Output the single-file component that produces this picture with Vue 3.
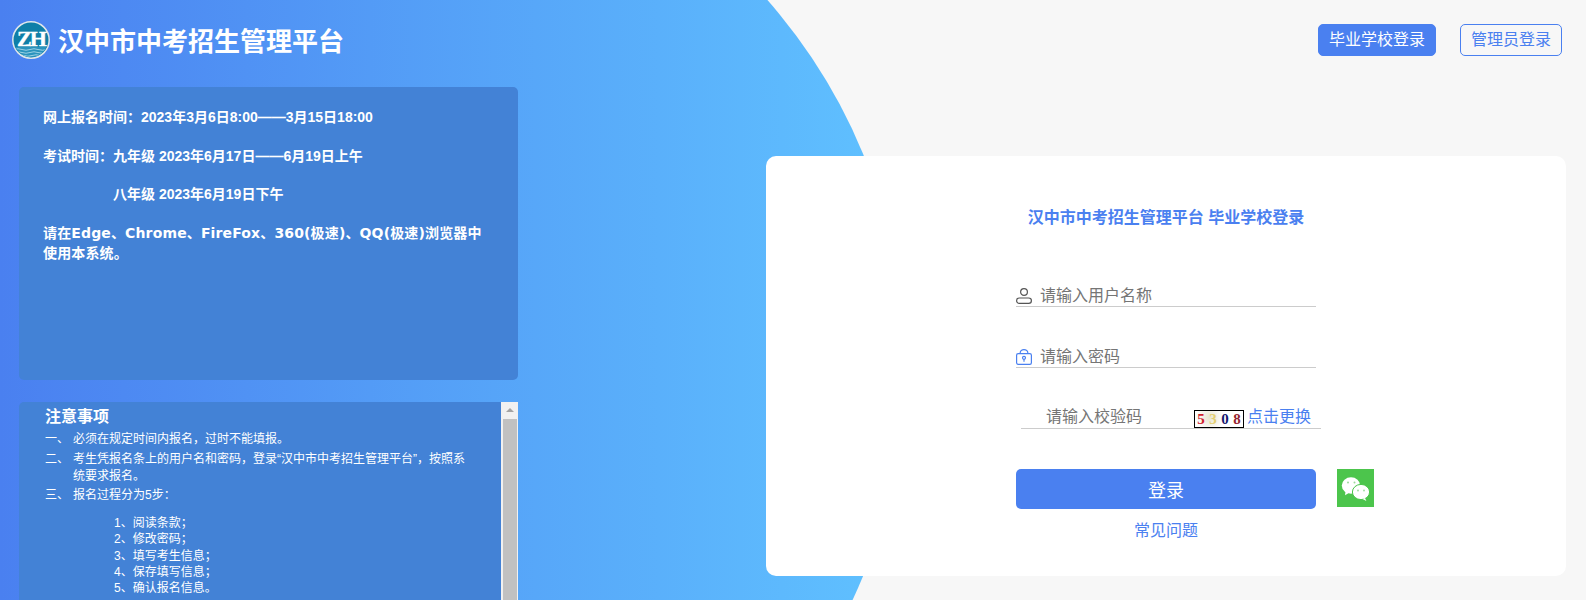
<template>
  <div class="page">
    <div class="hero"></div>

    <header class="top">
      <div class="brand">
        <svg class="logo" width="38" height="38" viewBox="0 0 38 38">
          <defs>
            <clipPath id="logoClip"><circle cx="19" cy="19" r="17" /></clipPath>
          </defs>
          <circle cx="19" cy="19" r="18.2" fill="#0f7fa8" stroke="#dfe6ea" stroke-width="1.5" />
          <g clip-path="url(#logoClip)">
            <rect x="0" y="26" width="38" height="12" fill="#2a93bd" />
            <path d="M2 28.5q4-1.5 8 0t8 0 8 0 10 0M2 31.5q4-1.5 8 0t8 0 8 0 10 0M4 34.5q4-1.5 8 0t8 0 8 0" fill="none" stroke="#a8d8e8" stroke-width="0.9" />
          </g>
          <text x="19" y="25" text-anchor="middle" class="logo-text">ZH</text>
        </svg>
        <h1>汉中市中考招生管理平台</h1>
      </div>
      <div class="tabs">
        <a class="tab active">毕业学校登录</a>
        <a class="tab">管理员登录</a>
      </div>
    </header>

    <main class="main">
      <aside class="side">
        <section class="panel info">
          <p>网上报名时间：2023年3月6日8:00——3月15日18:00</p>
          <p>考试时间：九年级 2023年6月17日——6月19日上午</p>
          <p class="indent">八年级 2023年6月19日下午</p>
          <p class="wide">请在Edge、Chrome、FireFox、360(极速)、QQ(极速)浏览器中使用本系统。</p>
        </section>

        <section class="panel notice">
          <div class="notice-body">
            <h3>注意事项</h3>
            <ol class="items">
              <li v-for="item in items" :key="item.no">
                <span class="no">{{ item.no }}、</span>
                <span>{{ item.text }}</span>
              </li>
            </ol>
            <div class="steps">
              <div v-for="step in steps" :key="step">{{ step }}</div>
            </div>
          </div>
          <div class="scrollbar">
            <span class="arrow"></span>
            <span class="thumb"></span>
          </div>
        </section>
      </aside>

      <section class="card">
        <h2>汉中市中考招生管理平台 毕业学校登录</h2>
        <form class="form" @submit.prevent>
          <label class="field">
            <svg width="16" height="16" viewBox="0 0 16 16" fill="none" stroke="#555" stroke-width="1.2">
              <circle cx="8" cy="4" r="3.4" />
              <rect x="0.6" y="10" width="14.8" height="5.4" rx="2.7" />
            </svg>
            <input type="text" placeholder="请输入用户名称" />
          </label>
          <label class="field">
            <svg width="16" height="16" viewBox="0 0 16 16" fill="none" stroke="#4a80f0" stroke-width="1.2">
              <rect x="0.6" y="4.6" width="14.8" height="10.8" rx="1.6" />
              <path d="M4.2 4.6V3.8a3.8 3.2 0 0 1 7.6 0v.8" />
              <circle cx="8" cy="8.8" r="1.5" />
              <path d="M8 10.3v2.5" />
            </svg>
            <input type="password" placeholder="请输入密码" />
          </label>
          <div class="field code">
            <input type="text" placeholder="请输入校验码" />
            <div class="captcha">
              <b class="c1">5</b><b class="c2">3</b><b class="c3">0</b><b class="c4">8</b>
            </div>
            <a class="change">点击更换</a>
          </div>
          <div class="actions">
            <div class="submit">
              <button type="submit">登录</button>
              <a class="faq">常见问题</a>
            </div>
            <svg class="wechat" width="37" height="38" viewBox="0 0 37 38">
              <rect width="37" height="38" fill="#4cc54c" />
              <ellipse cx="14" cy="16.5" rx="9.2" ry="8.2" fill="#fff" />
              <path d="M8.5 22l-.4 4.2 4.4-2.6z" fill="#fff" />
              <ellipse cx="24" cy="23" rx="8.6" ry="7.6" fill="#fff" stroke="#4cc54c" stroke-width="1" />
              <path d="M28 29l1.4 3-3.8-2z" fill="#fff" />
              <circle cx="11" cy="13.5" r="1" fill="#9ad99a" />
              <circle cx="17.5" cy="13.5" r="1" fill="#9ad99a" />
              <circle cx="21" cy="21.5" r="0.9" fill="#9ad99a" />
              <circle cx="27" cy="21.5" r="0.9" fill="#9ad99a" />
            </svg>
          </div>
        </form>
      </section>
    </main>
  </div>
</template>

<script setup>
const items = [
  { no: '一', text: '必须在规定时间内报名，过时不能填报。' },
  { no: '二', text: '考生凭报名条上的用户名和密码，登录“汉中市中考招生管理平台”，按照系统要求报名。' },
  { no: '三', text: '报名过程分为5步：' }
]

const steps = [
  '1、阅读条款；',
  '2、修改密码；',
  '3、填写考生信息；',
  '4、保存填写信息；',
  '5、确认报名信息。'
]
</script>

<style>
html,
body {
  margin: 0;
  overflow: hidden;
}
</style>

<style scoped>
.page {
  position: relative;
  height: 600px;
  overflow: hidden;
  background: #f7f7f7;
  font-family: "Liberation Sans", "Noto Sans CJK SC", sans-serif;
}

.hero {
  position: absolute;
  left: 0;
  top: 0;
  width: 905px;
  height: 600px;
  background: linear-gradient(90deg, #4a80f0 0%, #60c2ff 100%);
  clip-path: circle(553px at 352px 365px);
}

.top {
  position: relative;
  display: flex;
  align-items: center;
  justify-content: space-between;
  height: 80px;
  padding: 0 24px 0 12px;
}

.brand {
  display: flex;
  align-items: center;
  gap: 8px;
}

.logo-text {
  font-family: "Liberation Serif", serif;
  font-size: 22px;
  font-weight: bold;
  fill: #fff;
  stroke: #fff;
  stroke-width: 0.4;
  letter-spacing: -2px;
}

h1 {
  margin: 0 0 2px;
  font-size: 26px;
  font-weight: bold;
  color: #fff;
}

.tabs {
  display: flex;
  gap: 24px;
}

.tab {
  box-sizing: border-box;
  height: 32px;
  padding: 0 10px;
  border: 1px solid #4a80f0;
  border-radius: 5px;
  font-size: 16px;
  line-height: 30px;
  color: #4a80f0;
}

.tab.active {
  background: #4a80f0;
  color: #fff;
}

.main {
  position: relative;
  display: flex;
  justify-content: space-between;
  padding: 0 20px 0 19px;
}

.side {
  width: 499px;
  padding-top: 7px;
}

.panel {
  box-sizing: border-box;
  border-radius: 5px;
  background: #4382d6;
  color: #fff;
}

.info {
  height: 293px;
  padding: 20px 25px 0 24px;
  font-size: 14px;
  font-weight: bold;
}

.info p {
  margin: 0 0 18.5px;
  line-height: 20px;
}

.info .indent {
  padding-left: 70px;
}

.info .wide {
  font-family: "DejaVu Sans", "Noto Sans CJK SC", sans-serif;
  letter-spacing: 0.14px;
  line-height: 20.5px;
}

.notice {
  display: flex;
  height: 260px;
  margin-top: 22px;
}

.notice-body {
  flex: 1;
  padding: 4px 25px 0 26px;
  font-size: 12px;
}

h3 {
  margin: 0 0 3px;
  font-size: 16px;
  font-weight: bold;
  line-height: 22px;
}

.items {
  margin: 0;
  padding: 0;
  list-style: none;
}

.items li {
  display: flex;
  margin-bottom: 2.5px;
  line-height: 17px;
}

.no {
  flex: none;
  width: 28px;
}

.steps {
  margin-top: 11px;
  padding-left: 69px;
  line-height: 16.25px;
}

.scrollbar {
  flex: none;
  position: relative;
  width: 17px;
  background: #f1f1f1;
}

.arrow {
  position: absolute;
  left: 5px;
  top: 6px;
  border: 4px solid transparent;
  border-top: 0;
  border-bottom: 4px solid #a3a3a3;
}

.thumb {
  position: absolute;
  left: 2px;
  right: 1px;
  top: 17px;
  bottom: 0;
  background: #c1c1c1;
}

.card {
  box-sizing: border-box;
  width: 800px;
  height: 420px;
  margin-top: 76px;
  padding: 51px 0 0 250px;
  border-radius: 10px;
  background: #fff;
}

h2 {
  margin: 0 0 47px -250px;
  font-size: 16px;
  font-weight: bold;
  line-height: 22px;
  text-align: center;
  color: #4a80f0;
}

.form {
  width: 358px;
}

.field {
  display: flex;
  align-items: center;
  gap: 8px;
  box-sizing: border-box;
  width: 300px;
  height: 31px;
  margin-bottom: 30px;
  border-bottom: 1px solid #ccc;
  padding-top: 9px;
}

.field input {
  flex: 1;
  min-width: 0;
  padding: 0;
  border: 0;
  outline: 0;
  background: none;
  font: inherit;
  font-size: 16px;
}

.field input::placeholder {
  color: #757575;
}

.code {
  gap: 3px;
  margin-left: 5px;
  margin-bottom: 40px;
  padding-left: 25px;
  padding-top: 0;
  align-items: flex-end;
}

.code input {
  line-height: 22px;
}

.captcha {
  display: flex;
  justify-content: space-around;
  align-items: center;
  box-sizing: border-box;
  width: 50px;
  height: 18px;
  border: 1px solid #000;
  background: radial-gradient(circle at 30% 40%, #e8e4cf 0, #fff 40%), #fff;
  font-family: "Liberation Serif", serif;
  font-size: 15px;
  line-height: 16px;
}

.c1 { color: #d0202c; }
.c2 { color: #e5cf70; }
.c3 { color: #15166e; }
.c4 { color: #94242f; }

.change {
  font-size: 16px;
  line-height: 22px;
  color: #4a80f0;
  margin-right: 10px;
}

.actions {
  display: flex;
  align-items: flex-start;
  gap: 21px;
}

.submit {
  width: 300px;
  text-align: center;
}

button {
  display: block;
  width: 100%;
  height: 40px;
  padding: 0;
  border: 0;
  border-radius: 5px;
  background: #4a80f0;
  font: inherit;
  font-size: 18px;
  color: #fff;
}

.faq {
  display: block;
  margin-top: 11px;
  font-size: 16px;
  line-height: 22px;
  color: #4a80f0;
}
</style>
